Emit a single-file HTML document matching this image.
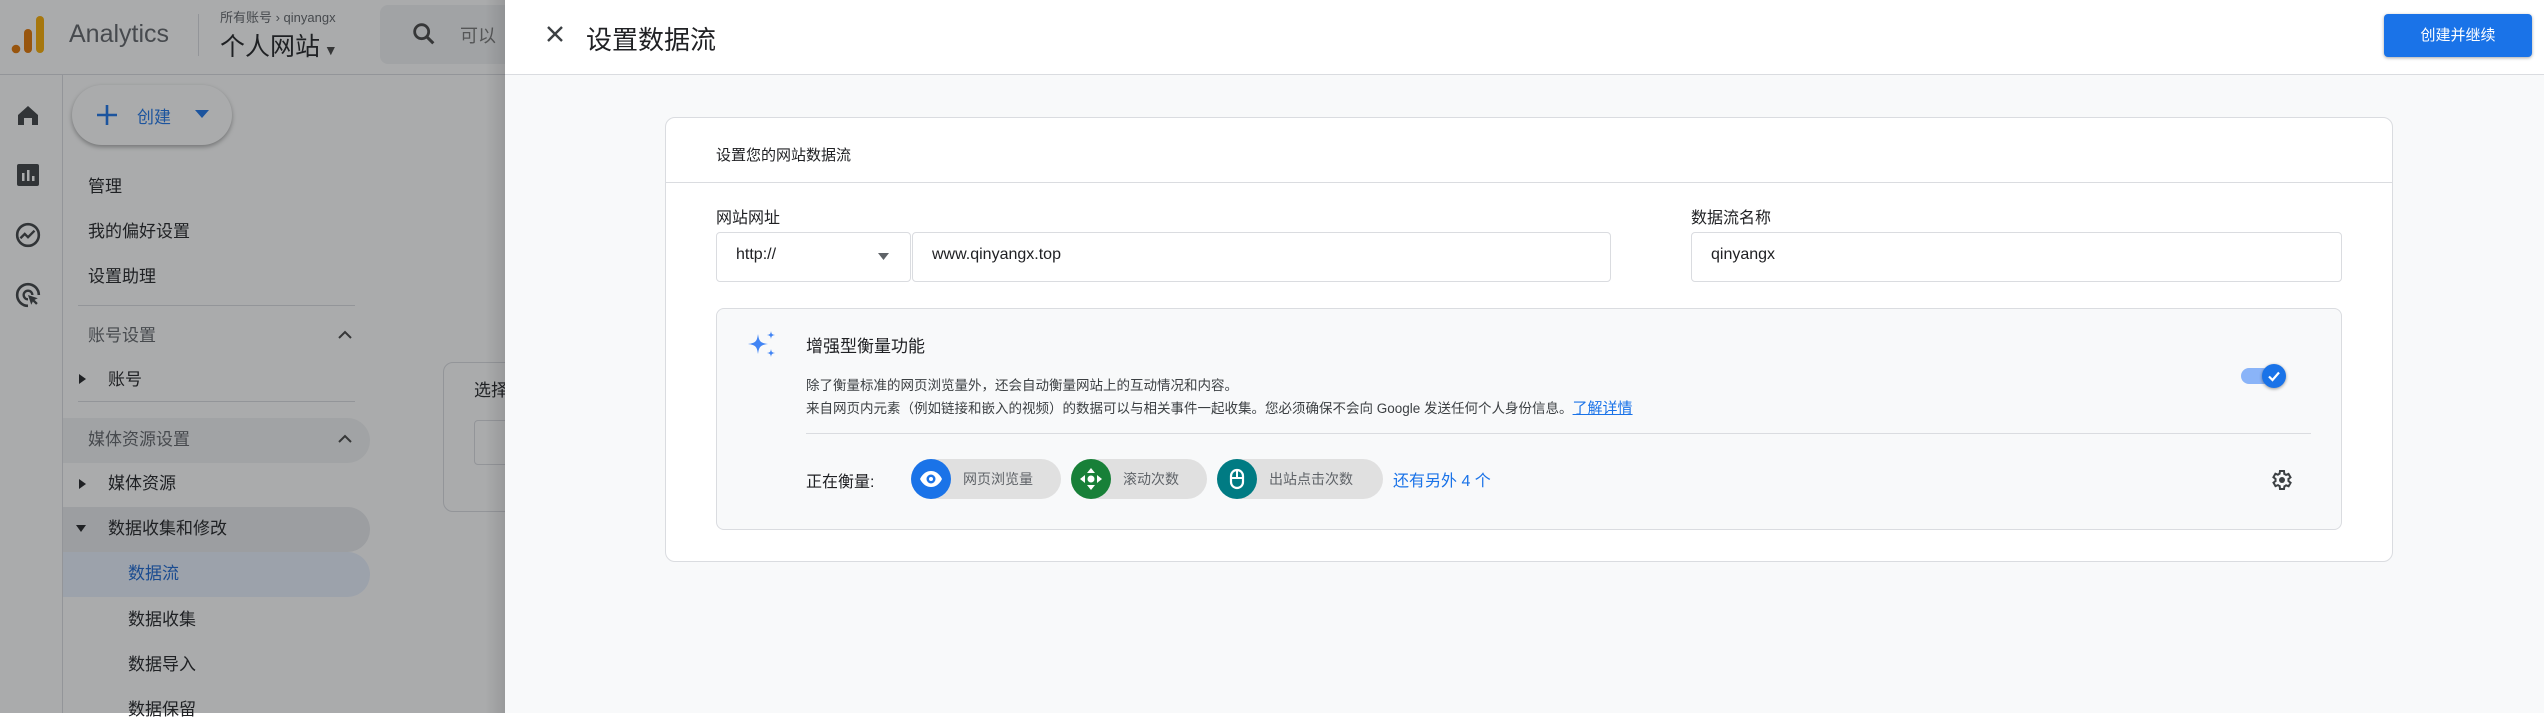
<!DOCTYPE html>
<html><head><meta charset="utf-8"><style>
*{box-sizing:border-box;margin:0;padding:0}
body{width:2544px;height:713px;overflow:hidden;position:relative;font-family:"Liberation Sans","Noto Sans CJK SC",sans-serif;color:#202124;background:#fff}
.a{position:absolute;white-space:nowrap}
.mi{position:absolute;font-size:17px;line-height:20px;color:#202124;white-space:nowrap}
.chip{position:absolute;top:459px;height:40px;border-radius:20px;background:#e0e0e0;font-size:14px;color:#5f6368;line-height:40px}
.chip .ic{position:absolute;left:0;top:0;width:40px;height:40px;border-radius:20px}
.chip span{position:absolute;left:52px;top:0}
</style></head><body>
<!-- underlying GA page -->
<div class="a" style="left:0;top:0;width:505px;height:75px;border-bottom:1px solid #dadce0"></div>
<svg class="a" style="left:10px;top:14px" width="40" height="42"><circle cx="6" cy="35" r="4.3" fill="#e37400"/><rect x="14" y="15" width="8" height="24" rx="4" fill="#e37400"/><rect x="26" y="2" width="8" height="37" rx="4" fill="#f9ab00"/></svg>
<div class="a" style="left:69px;top:20px;font-size:25px;color:#5f6368">Analytics</div>
<div class="a" style="left:198px;top:14px;width:1px;height:42px;background:#dadce0"></div>
<div class="a" style="left:220px;top:7px;font-size:13px;color:#5f6368">所有账号 › qinyangx</div>
<div class="a" style="left:220px;top:27px;font-size:25px;color:#202124">个人网站<span style="font-size:14px;color:#444"> ▼</span></div>
<div class="a" style="left:380px;top:5px;width:140px;height:59px;border-radius:8px;background:#f1f3f4"></div>
<svg class="a" style="left:410px;top:20px" width="28" height="28" viewBox="0 0 24 24"><circle cx="10" cy="10" r="6" fill="none" stroke="#444" stroke-width="2.4"/><path d="M14.5 14.5L20 20" stroke="#444" stroke-width="2.6"/></svg>
<div class="a" style="left:460px;top:22px;font-size:18px;color:#777">可以</div>
<div class="a" style="left:62px;top:75px;width:1px;height:638px;background:#dadce0"></div>
<svg class="a" style="left:16px;top:103px" width="24" height="24" viewBox="0 0 24 24"><path d="M2 12L12 3l10 9v10h-6v-7H8v7H2z" fill="#3c4043"/></svg>
<svg class="a" style="left:16px;top:163px" width="24" height="24" viewBox="0 0 24 24"><rect x="1" y="1" width="22" height="22" rx="2" fill="#3c4043"/><rect x="6" y="10" width="2.5" height="8" fill="#fff"/><rect x="11" y="7" width="2.5" height="11" fill="#fff"/><rect x="16" y="13" width="2.5" height="5" fill="#fff"/></svg>
<svg class="a" style="left:15px;top:222px" width="26" height="26" viewBox="0 0 24 24"><circle cx="12" cy="12" r="10" fill="none" stroke="#3c4043" stroke-width="2.4"/><path d="M5 15l4-4 3 3 6-6" fill="none" stroke="#3c4043" stroke-width="2.2"/></svg>
<svg class="a" style="left:15px;top:282px" width="26" height="26" viewBox="0 0 24 24"><path d="M12 22A10 10 0 1 1 22 12" fill="none" stroke="#3c4043" stroke-width="2.4"/><path d="M12 16a4 4 0 1 1 4-4" fill="none" stroke="#3c4043" stroke-width="2.2"/><path d="M12 12l9 3-3 1.5 3 3-1.5 1.5-3-3L15 21z" fill="#3c4043"/></svg>
<div class="a" style="left:72px;top:85px;width:160px;height:60px;border-radius:30px;background:#fff;box-shadow:0 2px 5px rgba(0,0,0,.35)"></div>
<svg class="a" style="left:95px;top:103px" width="24" height="24"><path d="M12 2v20M2 12h20" stroke="#1a73e8" stroke-width="2.6"/></svg>
<div class="a" style="left:137px;top:103px;font-size:17px;color:#1a73e8">创建</div>
<svg class="a" style="left:195px;top:110px" width="14" height="8"><path d="M0 0h14L7 8z" fill="#1a73e8"/></svg>
<div class="mi" style="left:88px;top:177px">管理</div>
<div class="mi" style="left:88px;top:222px">我的偏好设置</div>
<div class="mi" style="left:88px;top:267px">设置助理</div>
<div class="a" style="left:78px;top:305px;width:277px;height:1px;background:#dadce0"></div>
<div class="mi" style="left:88px;top:326px;color:#5f6368">账号设置</div>
<svg class="a" style="left:338px;top:330px" width="14" height="9"><path d="M1 8l6-6 6 6" fill="none" stroke="#444" stroke-width="2"/></svg>
<svg class="a" style="left:79px;top:374px" width="7" height="10"><path d="M0 0l7 5-7 5z" fill="#202124"/></svg>
<div class="mi" style="left:108px;top:370px">账号</div>
<div class="a" style="left:78px;top:301px;width:277px;height:1px;top:401px;background:#dadce0"></div>
<div class="a" style="left:63px;top:418px;width:307px;height:45px;border-radius:0 23px 23px 0;background:#f1f3f4"></div>
<div class="mi" style="left:88px;top:430px;color:#5f6368">媒体资源设置</div>
<svg class="a" style="left:338px;top:434px" width="14" height="9"><path d="M1 8l6-6 6 6" fill="none" stroke="#444" stroke-width="2"/></svg>
<svg class="a" style="left:79px;top:479px" width="7" height="10"><path d="M0 0l7 5-7 5z" fill="#202124"/></svg>
<div class="mi" style="left:108px;top:474px">媒体资源</div>
<div class="a" style="left:63px;top:507px;width:307px;height:45px;border-radius:0 23px 23px 0;background:#e8eaed"></div>
<svg class="a" style="left:76px;top:525px" width="10" height="7"><path d="M0 0h10L5 7z" fill="#202124"/></svg>
<div class="mi" style="left:108px;top:519px">数据收集和修改</div>
<div class="a" style="left:63px;top:552px;width:307px;height:45px;border-radius:0 23px 23px 0;background:#e8f0fe"></div>
<div class="mi" style="left:128px;top:564px;color:#1967d2">数据流</div>
<div class="mi" style="left:128px;top:610px">数据收集</div>
<div class="mi" style="left:128px;top:655px">数据导入</div>
<div class="mi" style="left:128px;top:700px">数据保留</div>
<div class="a" style="left:443px;top:362px;width:120px;height:150px;border:1px solid #dadce0;border-radius:10px;background:#fff"></div>
<div class="a" style="left:474px;top:376px;font-size:17px">选择</div>
<div class="a" style="left:474px;top:420px;width:60px;height:45px;border:1px solid #dadce0;border-radius:4px"></div>
<!-- overlay -->
<div class="a" style="left:0;top:0;width:505px;height:713px;background:rgba(32,33,36,0.38)"></div>
<div class="a" style="left:485px;top:0;width:20px;height:713px;background:linear-gradient(90deg,rgba(0,0,0,0),rgba(0,0,0,0.1))"></div>

<!-- panel -->
<div class="a" style="left:505px;top:0;width:2039px;height:713px;background:#f8f9fa"></div>
<div class="a" style="left:505px;top:0;width:2039px;height:75px;background:#fff;border-bottom:1px solid #dadce0"></div>
<svg class="a" style="left:546px;top:25px" width="18" height="18"><path d="M2 2l14 14M16 2L2 16" stroke="#3c4043" stroke-width="2.4"/></svg>
<div class="a" style="left:586px;top:20px;font-size:26px;color:#202124">设置数据流</div>
<div class="a" style="left:2384px;top:14px;width:148px;height:43px;border-radius:4px;background:#1a73e8;box-shadow:0 1px 3px rgba(0,0,0,.35);color:#fff;font-size:15px;text-align:center;line-height:43px">创建并继续</div>

<div class="a" style="left:665px;top:117px;width:1728px;height:445px;background:#fff;border:1px solid #dadce0;border-radius:10px"></div>
<div class="a" style="left:716px;top:144px;font-size:15px">设置您的网站数据流</div>
<div class="a" style="left:666px;top:182px;width:1726px;height:1px;background:#dadce0"></div>
<div class="a" style="left:716px;top:204px;font-size:16px">网站网址</div>
<div class="a" style="left:716px;top:232px;width:195px;height:50px;border:1px solid #dadce0;border-radius:4px"></div>
<div class="a" style="left:736px;top:246px;font-size:16px">http://</div>
<svg class="a" style="left:878px;top:253px" width="11" height="7"><path d="M0 0h11L5.5 7z" fill="#5f6368"/></svg>
<div class="a" style="left:912px;top:232px;width:699px;height:50px;border:1px solid #dadce0;border-radius:4px"></div>
<div class="a" style="left:932px;top:246px;font-size:16px">www.qinyangx.top</div>
<div class="a" style="left:1691px;top:204px;font-size:16px">数据流名称</div>
<div class="a" style="left:1691px;top:232px;width:651px;height:50px;border:1px solid #dadce0;border-radius:4px"></div>
<div class="a" style="left:1711px;top:246px;font-size:16px">qinyangx</div>

<div class="a" style="left:716px;top:308px;width:1626px;height:222px;background:#f8f9fa;border:1px solid #dadce0;border-radius:8px"></div>
<svg class="a" style="left:746px;top:330px" width="30" height="30" viewBox="0 0 30 30"><path d="M12 4C13 11 14 13 22 14C14 15 13 17 12 24C11 17 10 15 2 14C10 13 11 11 12 4Z" fill="#4285f4"/><path d="M25 1C25.5 4 26 4.5 29 5C26 5.5 25.5 6 25 9C24.5 6 24 5.5 21 5C24 4.5 24.5 4 25 1Z" fill="#4285f4"/><path d="M25 19C25.5 22 26 22.5 29 23C26 23.5 25.5 24 25 27C24.5 24 24 23.5 21 23C24 22.5 24.5 22 25 19Z" fill="#4285f4"/></svg>
<div class="a" style="left:806px;top:332px;font-size:17px">增强型衡量功能</div>
<div class="a" style="left:806px;top:374px;font-size:13.5px;color:#3c4043">除了衡量标准的网页浏览量外，还会自动衡量网站上的互动情况和内容。</div>
<div class="a" style="left:806px;top:397px;font-size:13.5px;color:#3c4043">来自网页内元素（例如链接和嵌入的视频）的数据可以与相关事件一起收集。您必须确保不会向 Google 发送任何个人身份信息。<span style="color:#1a73e8;text-decoration:underline;font-size:15px">了解详情</span></div>
<div class="a" style="left:2241px;top:368px;width:30px;height:16px;border-radius:8px;background:#8ab4f8"></div>
<div class="a" style="left:2262px;top:364px;width:24px;height:24px;border-radius:12px;background:#1a73e8;box-shadow:0 1px 3px rgba(0,0,0,.4)"></div>
<svg class="a" style="left:2266px;top:368px" width="16" height="16"><path d="M3 8.5l3.5 3.5L13 4.5" fill="none" stroke="#fff" stroke-width="2.2"/></svg>
<div class="a" style="left:806px;top:433px;width:1505px;height:1px;background:#dadce0"></div>
<div class="a" style="left:806px;top:468px;font-size:16px">正在衡量:</div>
<div class="chip" style="left:911px;width:150px"><div class="ic" style="background:#1a73e8"><svg width="40" height="40"><path d="M9 20c3-6 7-8 11-8s8 2 11 8c-3 6-7 8-11 8s-8-2-11-8z" fill="#fff"/><circle cx="20" cy="20" r="4.5" fill="#1a73e8"/><circle cx="20" cy="20" r="2" fill="#fff"/></svg></div><span>网页浏览量</span></div>
<div class="chip" style="left:1071px;width:136px"><div class="ic" style="background:#188038"><svg width="40" height="40"><path d="M20 9l4 5h-8zM20 31l-4-5h8zM9 20l5-4v8zM31 20l-5 4v-8z" fill="#fff"/><circle cx="20" cy="20" r="3.5" fill="#fff"/></svg></div><span>滚动次数</span></div>
<div class="chip" style="left:1217px;width:166px"><div class="ic" style="background:#007b83"><svg width="40" height="40"><rect x="14" y="11" width="12" height="18" rx="6" fill="none" stroke="#fff" stroke-width="2.2"/><path d="M20 12v7M15 19h10" stroke="#fff" stroke-width="2"/></svg></div><span>出站点击次数</span></div>
<div class="a" style="left:1393px;top:467px;font-size:16px;color:#1a73e8">还有另外 4 个</div>
<svg class="a" style="left:2269px;top:468px" width="24" height="24" viewBox="0 0 24 24"><path d="M19.4 13a7.5 7.5 0 0 0 0-2l2.1-1.6-2-3.5-2.5 1a7 7 0 0 0-1.7-1L15 3h-4l-.4 2.7a7 7 0 0 0-1.7 1l-2.5-1-2 3.5L6.6 11a7.5 7.5 0 0 0 0 2l-2.1 1.6 2 3.5 2.5-1a7 7 0 0 0 1.7 1L11 21h4l.4-2.7a7 7 0 0 0 1.7-1l2.5 1 2-3.5z" fill="none" stroke="#3c4043" stroke-width="2"/><circle cx="13" cy="12" r="3" fill="#3c4043"/></svg>
</body></html>
